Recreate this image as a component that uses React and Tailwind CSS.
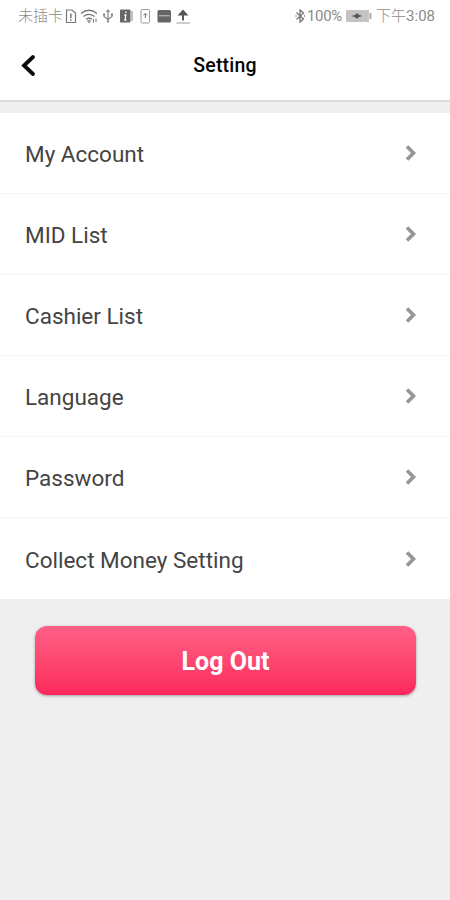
import React from "react";

const MENU_ITEMS = [
  "My Account",
  "MID List",
  "Cashier List",
  "Language",
  "Password",
  "Collect Money Setting",
];

function LeftStatusIcons() {
  return (
    <svg width="128" height="20" viewBox="0 0 128 20" fill="none" stroke="#777" strokeWidth="1.2">
      {/* sim card */}
      <path d="M3.5 4h5.500l3.500 3v9.500h-9z" />
      <path d="M7.800 7.500v4.500M7.800 13.200v1.600" strokeWidth="1.500" />
      {/* wifi */}
      <path d="M18 7.500c5-4 11-4 16 0M20.500 10.500c3.500-2.700 7.500-2.700 11 0M23 13.300c2-1.500 4-1.500 6 0" strokeWidth="1.400" />
      <path d="M24.500 14.800h3l-1.500 2zM30.500 13v3.500M33 12.500V16" strokeWidth="1" />
      {/* usb */}
      <path d="M45 4v12M41 8.500v2l4 3 4-3v-2M43.500 6L45 4l1.500 2" stroke="#888" strokeWidth="1.200" />
      <path d="M40 8.500h2.200M47.800 8.500H50M44 15.500h2" stroke="#888" strokeWidth="2" />
      {/* info */}
      <rect x="57" y="3.500" width="10.500" height="13" rx="1" fill="#666" stroke="none" />
      <path d="M69 5v10" stroke="#bbb" strokeWidth="1.800" />
      <path d="M62.800 5.500v1.500M61.300 9h1.500l-.8 5h1.500" stroke="#fff" strokeWidth="1.300" />
      {/* phone */}
      <rect x="78" y="3.500" width="8.500" height="13.500" rx="1.200" stroke="#999" strokeWidth="1" />
      <path d="M82.300 12V7.500M80.500 9.300l1.800-1.800 1.800 1.800" stroke="#777" strokeWidth="1" />
      {/* card */}
      <rect x="94.500" y="4" width="13.500" height="12.500" rx="1.500" fill="#666" stroke="none" />
      <path d="M96 9.800h10.500" stroke="#ccc" strokeWidth="1" />
      {/* upload */}
      <path d="M120 14.500V6" stroke="#555" strokeWidth="2" />
      <path d="M114.500 9.500L120 3.500l5.500 6z" fill="#555" stroke="none" />
      <path d="M113.500 17h13.500" stroke="#aaa" />
    </svg>
  );
}

function StatusBar() {
  return (
    <div className="flex h-8 items-center pr-[15px] pl-[18px] text-[15px] leading-5 text-[#8b8b8b]">
      <span className="font-light">未插卡</span>
      <LeftStatusIcons />
      <svg className="ml-auto" width="12" height="16" viewBox="0 0 12 16" fill="none" stroke="#777" strokeWidth="1.300">
        <path d="M2.500 4.500l7 6.500-3.500 3V2l3.500 3-7 6.500M1.500 8h1M10 8h1" />
      </svg>
      <span className="-tracking-[0.3px] ml-px">100%</span>
      <svg className="ml-1" width="26" height="14" viewBox="0 0 26 14">
        <rect x="0" y="1" width="23" height="12" rx="1" fill="#c4c4c4" />
        <rect x="23.500" y="4" width="2" height="6" fill="#aaa" />
        <path d="M5.500 7l4-1.300L11 4l1.800 1.700L16.500 7l-4 1.300L11 10 9.300 8.300z" fill="#555" />
      </svg>
      <span className="ml-1 font-light">下午<span className="font-normal">3:08</span></span>
    </div>
  );
}

function Header() {
  return (
    <header className="grid h-[70px] grid-cols-[60px_1fr_60px] items-center border-b-2 border-[#dcdcdc]">
      <button type="button" aria-label="Back" className="pl-5">
        <svg width="18" height="24" viewBox="0 0 18 24" fill="none" stroke="#0b0b0b" strokeWidth="3.800">
          <path d="M13 3L4 11.500l9 8.500" strokeLinecap="round" />
        </svg>
      </button>
      <h1 className="text-center text-[19.5px] font-medium tracking-[0.2px] text-[#050505]">Setting</h1>
    </header>
  );
}

function MenuRow({ label }) {
  return (
    <li className="flex h-[81px] items-center justify-between border-b border-[#f6f6f6] pr-[33px] pl-[25px] last:border-b-0">
      <span className="pt-1 text-[22.5px] text-[#444]">{label}</span>
      <svg width="14" height="18" viewBox="0 0 14 18" fill="none" stroke="#969696" strokeWidth="3.600">
        <path d="M4 2.500l6.500 6.500L4 15.500" />
      </svg>
    </li>
  );
}

export default function App() {
  return (
    <div className="h-[900px] w-[450px] overflow-hidden bg-[#efefef] font-[Roboto,'Noto_Sans_CJK_SC',sans-serif]">
      <div className="bg-white">
        <StatusBar />
        <Header />
      </div>
      <ul className="mt-[11px] bg-white">
        {MENU_ITEMS.map((label) => (
          <MenuRow key={label} label={label} />
        ))}
      </ul>
      <div className="pt-[27px] pr-[34px] pl-[35px]">
        <button
          type="button"
          className="h-[69px] w-full rounded-xl bg-linear-to-b from-[#ff5f86] to-[#fb265b] pt-[3px] text-[25px] font-bold text-white shadow-[0_1px_3px_rgba(0,0,0,0.35)]"
        >
          Log Out
        </button>
      </div>
    </div>
  );
}
